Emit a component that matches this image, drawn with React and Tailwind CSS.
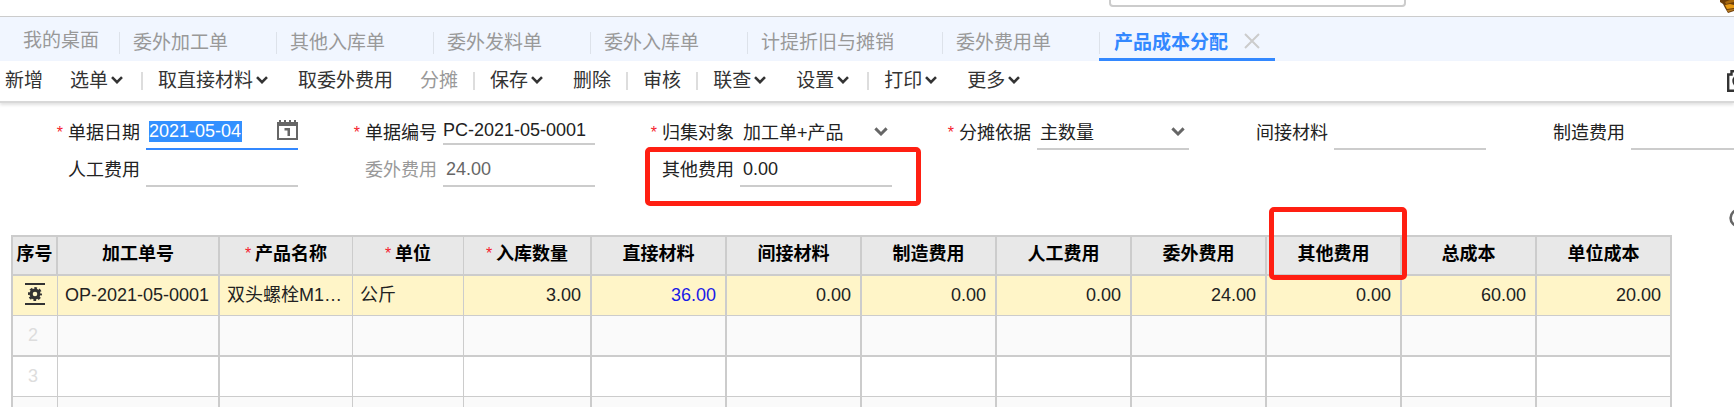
import React from "react";

const TABS = ["委外加工单", "其他入库单", "委外发料单", "委外入库单", "计提折旧与摊销", "委外费用单"];

const TOOLS = [
  { label: "新增" },
  { label: "选单", menu: true },
  { sep: true },
  { label: "取直接材料", menu: true },
  { label: "取委外费用" },
  { label: "分摊", disabled: true },
  { sep: true },
  { label: "保存", menu: true },
  { label: "删除" },
  { sep: true },
  { label: "审核" },
  { sep: true },
  { label: "联查", menu: true },
  { label: "设置", menu: true },
  { sep: true },
  { label: "打印", menu: true },
  { label: "更多", menu: true },
];

const LEFT = "pl-[7px] pr-2 text-left";
const RIGHT = "pl-2 pr-[9px] text-right";

const COLUMNS = [
  { label: "序号" },
  { label: "加工单号", align: LEFT },
  { label: "产品名称", align: LEFT, required: true },
  { label: "单位", align: LEFT, required: true },
  { label: "入库数量", align: RIGHT, required: true },
  { label: "直接材料", align: RIGHT },
  { label: "间接材料", align: RIGHT },
  { label: "制造费用", align: RIGHT },
  { label: "人工费用", align: RIGHT },
  { label: "委外费用", align: RIGHT },
  { label: "其他费用", align: RIGHT, marked: true },
  { label: "总成本", align: RIGHT },
  { label: "单位成本", align: RIGHT },
];

const ROW = ["OP-2021-05-0001", "双头螺栓M1…", "公斤", "3.00", "36.00", "0.00", "0.00", "0.00", "24.00", "0.00", "60.00", "20.00"];

function Chevron({ className }) {
  return (
    <svg viewBox="0 0 12 8" className={className} fill="none" stroke="currentColor" strokeWidth="2.6" aria-hidden="true">
      <path d="M1 1.2 6 6.2 11 1.2" />
    </svg>
  );
}

function CalendarIcon() {
  return (
    <svg viewBox="0 0 21 20" className="h-5 w-[21px] shrink-0 text-[#666]" fill="currentColor" aria-hidden="true">
      <path fillRule="evenodd" d="M0 2h2V0h2v2h3V0h2v2h3V0h2v2h3V0h2v2h2v18H0ZM2 6v12h17V6Z" />
      <path d="M7.500 8h5.500v8h-2.500v-5.500h-3Z" />
    </svg>
  );
}

function GearIcon() {
  return (
    <svg viewBox="0 0 20 22" className="h-[22px] w-5 text-[#333]" fill="currentColor" aria-hidden="true">
      <path d="M0 0h20v2H0ZM0 20h20v2H0Z" />
      <circle cx="10" cy="11" r="3.900" fill="none" stroke="currentColor" strokeWidth="3.2" />
      <circle cx="10" cy="11" r="5.800" fill="none" stroke="currentColor" strokeWidth="2.4" strokeDasharray="2.6 1.955" strokeDashoffset="1.3" />
    </svg>
  );
}

function Field({ id, label, required, muted, children }) {
  return (
    <div className="flex items-start justify-end gap-[6px]">
      <label htmlFor={id} className={muted ? "flex h-7 items-center text-[#999]" : "flex h-7 items-center text-[#222]"}>
        {required && <span className="mr-[5px] text-[16px] leading-none text-[#f5222d]">*</span>}
        {label}
      </label>
      {children}
    </div>
  );
}

function SelectField({ id, value }) {
  return (
    <div className="flex items-start">
      <select id={id} className={box + " h-[31px] appearance-none pb-px pl-[3px]"}>
        <option>{value}</option>
      </select>
      <Chevron className="mt-2 mr-1 -ml-[18px] h-[9px] w-[14px] text-[#666]" />
    </div>
  );
}

const box = "w-[152px] rounded-none border-b-2 border-[#ccc] bg-transparent outline-none";

export default function App() {
  return (
    <div className="overflow-x-hidden bg-white font-['Liberation_Sans','Noto_Sans_CJK_SC',sans-serif] text-[18px] text-[#222]">
      <header className="flex h-4 items-end overflow-hidden">
        <div className="flex-1" />
        <input aria-label="搜索" className="mb-[9px] h-[30px] w-[297px] shrink-0 rounded-[4px] border-2 border-[#ccc] bg-white" />
        <div className="flex w-[328px] justify-end">
          <svg viewBox="0 0 14 13" className="mb-[3px] h-[13px] w-[14px]" aria-hidden="true">
            <path d="M0 0h14v11l-6 2-3-5-2-4-3-2Z" fill="#6b3d08" />
            <path d="m5 5 5-1 4 1v3l-7 1Z" fill="#e89a12" />
            <path d="m5 2 5-2h4v2l-8 2Z" fill="#a8680c" />
            <path d="m7 10 7-1v1l-6 2Z" fill="#b87a20" />
          </svg>
        </div>
      </header>

      <nav className="flex h-[45px] items-stretch border-t border-[#ccc] bg-[#f1f6ff] text-[19px] whitespace-nowrap text-[#999]">
        <a href="#desk" className="flex w-[119px] items-center pt-1 pl-[23px]">我的桌面</a>
        {TABS.map((t) => (
          <a key={t} href="#tab" className="flex items-center pt-2">
            <span className="h-[22px] w-px bg-[#dde2ea]" />
            <span className="pr-12 pl-[13px]">{t}</span>
          </a>
        ))}
        <div className="flex items-center border-b-[3px] border-[#3388ff] pt-[11px]">
          <span className="h-[22px] w-px bg-[#dde2ea]" />
          <a href="#current" className="pl-[14px] font-bold text-[#3388ff]">产品成本分配</a>
          <button type="button" aria-label="关闭" className="mr-[15px] mb-1 ml-4 text-[#ccc]">
            <svg viewBox="0 0 16 16" className="h-4 w-4" fill="none" stroke="currentColor" strokeWidth="2" aria-hidden="true">
              <path d="m1 1 14 14M15 1 1 15" />
            </svg>
          </button>
        </div>
      </nav>

      <div className="flex h-[42px] items-center border-b-2 border-[#d8d8d8] pl-[5px] text-[19px] whitespace-nowrap text-[#333] shadow-[0_2px_3px_rgba(0,0,0,0.12)]">
        {TOOLS.map((t, i) =>
          t.sep ? (
            <span key={i} className="mr-[15px] -ml-3 h-[18px] w-0.5 bg-[#ddd]" />
          ) : (
            <button
              key={i}
              type="button"
              disabled={t.disabled}
              className={t.disabled ? "mr-[27px] flex items-center text-[#999]" : "mr-[27px] flex items-center"}
            >
              {t.label}
              {t.menu && <Chevron className="mr-[3px] mb-[3px] ml-[3px] h-2 w-3" />}
            </button>
          )
        )}
        <button type="button" aria-label="拍照" className="-mr-[21px] ml-auto text-[#333]">
          <svg viewBox="0 0 28 22" className="h-[22px] w-7" fill="none" stroke="currentColor" strokeWidth="2.4" aria-hidden="true">
            <path d="M1.200 20.800V4.500H4.500V1.200h19V4.500h3.300V20.800Z" />
            <circle cx="12" cy="11" r="5.500" />
          </svg>
        </button>
      </div>

      <form className="relative grid grid-cols-[repeat(6,297px)] gap-y-[6px] pt-4 pl-px text-[18px] leading-[21px] whitespace-nowrap">
        <Field id="date" label="单据日期" required>
          <div className="flex h-[31px] w-[152px] items-start justify-between border-b-2 border-[#3388ff] pt-px">
            <span className="grid pt-px pl-[3px]">
              <input id="date" defaultValue="2021-05-04" className="h-[21px] w-[93px] bg-[#3390ff] text-white outline-none" />
            </span>
            <CalendarIcon />
          </div>
        </Field>
        <Field id="code" label="单据编号" required>
          <input id="code" defaultValue="PC-2021-05-0001" className={box + " h-[26px] pb-px"} />
        </Field>
        <Field id="target" label="归集对象" required>
          <SelectField id="target" value="加工单+产品" />
        </Field>
        <Field id="basis" label="分摊依据" required>
          <SelectField id="basis" value="主数量" />
        </Field>
        <Field id="indirect" label="间接材料">
          <input id="indirect" className={box + " h-[31px]"} />
        </Field>
        <Field id="making" label="制造费用">
          <input id="making" className={box + " h-[31px]"} />
        </Field>
        <Field id="labor" label="人工费用">
          <input id="labor" className={box + " h-[31px]"} />
        </Field>
        <Field id="outer" label="委外费用" muted>
          <input id="outer" disabled defaultValue="24.00" className={box + " h-[31px] pb-[2px] pl-[3px] text-[#666]"} />
        </Field>
        <Field id="other" label="其他费用">
          <input id="other" defaultValue="0.00" className={box + " h-[31px] pb-[2px] pl-[3px]"} />
        </Field>
        <div className="pointer-events-none absolute top-11 left-[645px] h-[59px] w-[276px] rounded-[5px] border-5 border-[#ff1f12]" />
      </form>

      <div className="flex h-12 items-start justify-end">
        <svg viewBox="0 0 20 20" className="mt-[21px] -mr-[15px] h-5 w-5 shrink-0 text-[#666]" fill="none" stroke="currentColor" strokeWidth="2.6" aria-hidden="true">
          <circle cx="10" cy="10" r="8.400" />
        </svg>
      </div>

      <div className="pr-[62px] pl-[11px]">
        <table className="w-full table-fixed border-separate border-spacing-0 border-t-2 border-l-2 border-[#ccc] leading-[21px]">
          <colgroup>
            <col className="w-[45px]" />
            <col className="w-[162px]" />
            <col className="w-[133px]" />
            <col className="w-[111px]" />
            <col className="w-[128px]" />
            <col /><col /><col /><col /><col /><col /><col /><col />
          </colgroup>
          <thead>
            <tr className="h-[39px] bg-[#e8e8e8] text-black">
              {COLUMNS.map((c, i) => (
                <th
                  key={c.label}
                  className={
                    (i === 2 || i === 3 ? "border-r" : "border-r-2") +
                    " relative border-b-2 border-[#ccc] p-0 pb-[3px] font-bold whitespace-nowrap" +
                    (c.marked ? " z-10" : "")
                  }
                >
                  {c.required && <span className="mr-1 align-[1px] text-[16px] font-normal text-[#f5222d]">*</span>}
                  {c.label}
                  {c.marked && (
                    <span className="pointer-events-none absolute -top-[30px] left-[2px] h-[73px] w-[138px] rounded-[5px] border-5 border-[#ff1f12]" />
                  )}
                </th>
              ))}
            </tr>
          </thead>
          <tbody>
            <tr className="h-10 bg-[#fff5c8]">
              <td className="border-r border-b border-[#ccc] p-0 pb-[3px]">
                <button type="button" aria-label="行设置" className="mx-auto block">
                  <GearIcon />
                </button>
              </td>
              {ROW.map((v, i) => (
                <td
                  key={i}
                  className={
                    (i === 1 || i === 2 ? "border-r" : "border-r-2") +
                    " border-b border-[#ccc] py-0 whitespace-nowrap " +
                    COLUMNS[i + 1].align +
                    (i === 4 ? " text-[#1a1ae6]" : "")
                  }
                >
                  {v}
                </td>
              ))}
            </tr>
            {[2, 3, 4].map((n) => (
              <tr key={n} className={n === 2 ? "h-[41px] bg-[#fafafa]" : n === 3 ? "h-10 bg-white" : "h-[10px] bg-[#fafafa]"}>
                {COLUMNS.map((c, i) => (
                  <td
                    key={i}
                    className={
                      (i === 0 || i === 2 || i === 3 ? "border-r" : "border-r-2") +
                      (n === 2 ? " border-b-2" : n === 3 ? " border-b" : "") +
                      " border-[#ccc] p-0 pr-1 text-center text-[#ddd]"
                    }
                  >
                    {i === 0 && n < 4 ? n : null}
                  </td>
                ))}
              </tr>
            ))}
          </tbody>
        </table>
      </div>
    </div>
  );
}
